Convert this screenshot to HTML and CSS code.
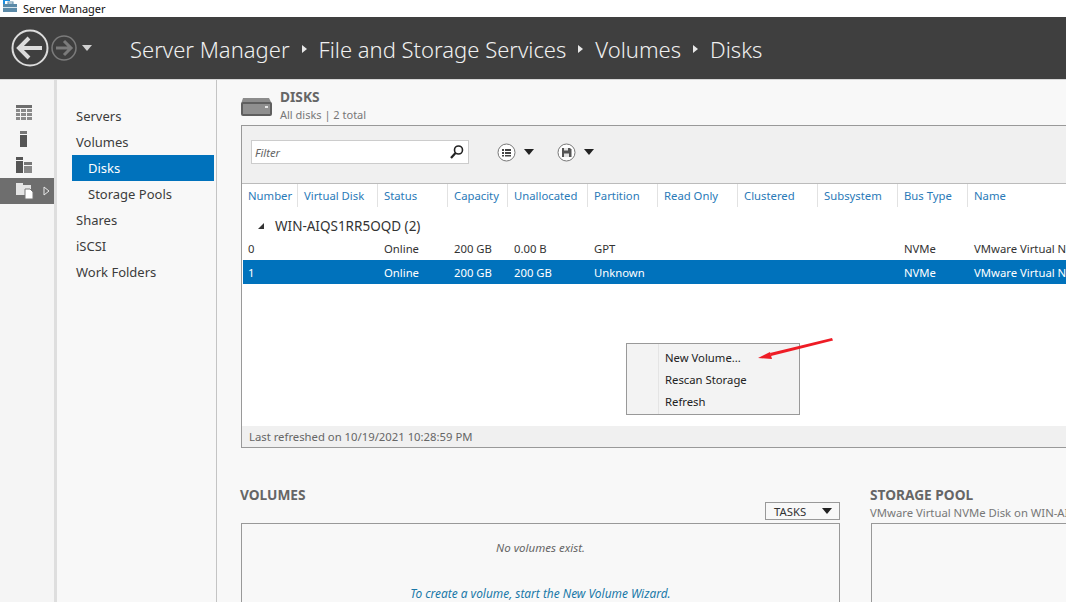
FILE: index.html
```html
<!DOCTYPE html>
<html lang="en">
<head>
    <meta charset="UTF-8">
    <title>Server Manager</title>
    <link rel="stylesheet" href="styles.css">
</head>
<body>
    <div class="titlebar">
        <svg class="app-icon" width="16" height="16" viewBox="0 0 16 16">
            <rect x="1" y="0" width="7" height="2" fill="#1d8fe0"/>
            <rect x="1" y="0" width="2" height="12" fill="#1d8fe0"/>
            <rect x="1" y="5" width="14" height="8" fill="#5b8aa8"/>
            <rect x="1" y="8" width="14" height="1" fill="#d5e3ec"/>
            <rect x="6" y="3" width="5" height="2" fill="none" stroke="#5b8aa8"/>
        </svg>
        <span>Server Manager</span>
    </div>

    <header class="header">
        <svg class="nav-back" width="38" height="38" viewBox="0 0 38 38">
            <circle cx="19" cy="19" r="17.5" fill="none" stroke="#dcdcdc" stroke-width="2"/>
            <path d="M8 19H31M18 9L8 19L18 29" fill="none" stroke="#dcdcdc" stroke-width="4"/>
        </svg>
        <svg class="nav-forward" width="26" height="26" viewBox="0 0 26 26">
            <circle cx="13" cy="13" r="12" fill="none" stroke="#7b7b7b" stroke-width="1.5"/>
            <path d="M20 13H5M13 6L20 13L13 20" fill="none" stroke="#7b7b7b" stroke-width="3"/>
        </svg>
        <span class="nav-caret"></span>
        <nav class="breadcrumb">
            <span>Server Manager</span><i></i>
            <span>File and Storage Services</span><i></i>
            <span>Volumes</span><i></i>
            <span>Disks</span>
        </nav>
    </header>

    <div class="workspace">
        <aside class="rail">
            <div class="rail-item">
                <svg width="16" height="16" viewBox="0 0 16 16" fill="#6d6d6d">
                    <rect width="16" height="3"/>
                    <path d="M0 4h4v3H0zM5 4h5v3H5zM11 4h5v3h-5zM0 8h4v3H0zM5 8h5v3H5zM11 8h5v3h-5zM0 12h4v3H0zM5 12h5v3H5zM11 12h5v3h-5z" fill="#8a8a8a"/>
                </svg>
            </div>
            <div class="rail-item">
                <svg width="16" height="16" viewBox="0 0 16 16" fill="#555">
                    <rect x="4" y="0" width="7" height="3" fill="#777"/>
                    <rect x="4" y="4" width="7" height="12"/>
                </svg>
            </div>
            <div class="rail-item">
                <svg width="16" height="16" viewBox="0 0 16 16" fill="#555">
                    <rect x="0" y="0" width="7" height="3"/>
                    <rect x="0" y="4" width="7" height="12"/>
                    <rect x="8" y="5" width="8" height="3" fill="#777"/>
                    <rect x="8" y="9" width="8" height="7" fill="#888"/>
                </svg>
            </div>
            <div class="rail-item rail-active">
                <svg width="18" height="18" viewBox="0 0 18 18">
                    <path d="M0 1h7v2h8v10H0z" fill="#e4e4e4"/>
                    <path d="M9 7h5l3 3v7H9z" fill="#fff" stroke="#777"/>
                </svg>
                <svg class="rail-arrow" width="7" height="10" viewBox="0 0 7 10">
                    <path d="M1 1L6 5L1 9z" fill="none" stroke="#e8e8e8"/>
                </svg>
            </div>
        </aside>

        <nav class="side">
            <a>Servers</a>
            <a>Volumes</a>
            <a class="sub selected">Disks</a>
            <a class="sub">Storage Pools</a>
            <a>Shares</a>
            <a>iSCSI</a>
            <a>Work Folders</a>
        </nav>

        <main class="main">
            <div class="section-head">
                <svg width="34" height="20" viewBox="0 0 34 20">
                    <path d="M3 1h26l3 6H1z" fill="#8c8c8c"/>
                    <rect x="1" y="5" width="31" height="14" rx="2" fill="#5f5f5f"/>
                    <rect x="3" y="7" width="27" height="10" fill="#8f8f8f"/>
                    <rect x="25" y="9" width="3" height="2" fill="#e6e6e6"/>
                </svg>
                <div>
                    <h2>DISKS</h2>
                    <p>All disks | 2 total</p>
                </div>
            </div>

            <section class="panel">
                <div class="toolbar">
                    <div class="filter">
                        <span>Filter</span>
                        <svg width="16" height="16" viewBox="0 0 16 16">
                            <circle cx="9.5" cy="6" r="4" fill="none" stroke="#222" stroke-width="1.6"/>
                            <path d="M6.5 9L2 14" stroke="#222" stroke-width="2.2"/>
                        </svg>
                    </div>
                    <button class="tool">
                        <svg width="19" height="19" viewBox="0 0 19 19">
                            <circle cx="9.500" cy="9.500" r="8.500" fill="#fff" stroke="#777"/>
                            <path d="M5 6h2v2H5zM8 6h6v2H8zM5 9h2v2H5zM8 9h6v2H8zM5 12h2v1.500H5zM8 12h6v1.500H8z" fill="#444"/>
                        </svg>
                        <i class="caret"></i>
                    </button>
                    <button class="tool">
                        <svg width="19" height="19" viewBox="0 0 19 19">
                            <circle cx="9.500" cy="9.500" r="8.500" fill="#fff" stroke="#777"/>
                            <path d="M5 5h8l1.500 1.500V14H5z" fill="#555"/>
                            <path d="M7 5h4v2.500H7zM7 10.500h5V14H7z" fill="#e4e4e4"/>
                        </svg>
                        <i class="caret"></i>
                    </button>
                </div>

                <div class="table">
                    <div class="row columns">
                        <span>Number</span><span>Virtual Disk</span><span>Status</span><span>Capacity</span><span>Unallocated</span><span>Partition</span><span>Read Only</span><span>Clustered</span><span>Subsystem</span><span>Bus Type</span><span>Name</span>
                    </div>
                    <div class="group"><i></i>WIN-AIQS1RR5OQD (2)</div>
                    <div class="row">
                        <span>0</span><span></span><span>Online</span><span>200 GB</span><span>0.00 B</span><span>GPT</span><span></span><span></span><span></span><span>NVMe</span><span>VMware Virtual NVMe Disk</span>
                    </div>
                    <div class="row row-selected">
                        <span>1</span><span></span><span>Online</span><span>200 GB</span><span>200 GB</span><span>Unknown</span><span></span><span></span><span></span><span>NVMe</span><span>VMware Virtual NVMe Disk</span>
                    </div>
                </div>

                <div class="status">Last refreshed on 10/19/2021 10:28:59 PM</div>
            </section>

            <div class="lower">
                <section class="volumes">
                    <div class="lower-head">
                        <h2>VOLUMES</h2>
                        <button class="tasks">TASKS<i class="caret"></i></button>
                    </div>
                    <div class="box box-empty">
                        <p class="empty">No volumes exist.</p>
                        <p class="wizard">To create a volume, start the New Volume Wizard.</p>
                    </div>
                </section>
                <section class="pool">
                    <div class="lower-head">
                        <div>
                            <h2>STORAGE POOL</h2>
                            <p>VMware Virtual NVMe Disk on WIN-AIQS1RR5OQD</p>
                        </div>
                    </div>
                    <div class="box"></div>
                </section>
            </div>
        </main>
    </div>

    <ul class="menu">
        <li>New Volume...</li>
        <li>Rescan Storage</li>
        <li>Refresh</li>
    </ul>
    <svg class="arrow" width="78" height="24" viewBox="0 0 78 24">
        <path d="M76 0L77 2.500L15 18L14 15z" fill="#ee1c25"/>
        <path d="M2 20L14 14L16 21z" fill="#ee1c25"/>
    </svg>
</body>
</html>
```

FILE: styles.css
```css
* {
    box-sizing: border-box;
}

html, body {
    margin: 0;
    height: 602px;
    overflow: hidden;
}

body {
    font-family: "Noto Sans", "Open Sans", sans-serif;
    font-size: 12px;
    color: #333;
    background-color: #f8f8f8;
    display: flex;
    flex-direction: column;
}

h2, p {
    margin: 0;
}

i {
    display: block;
}

.titlebar {
    height: 17px;
    flex: none;
    background-color: #fff;
    display: flex;
    align-items: center;
    gap: 5px;
    padding-left: 2px;
    font-size: 11px;
    color: #111;
    overflow: hidden;
}

.app-icon {
    margin-top: -4px;
    flex: none;
}

.header {
    height: 63px;
    flex: none;
    background-color: #3f3f3f;
    border-bottom: 1px solid #d6d6d6;
    display: flex;
    align-items: center;
    padding-left: 11px;
}

.nav-forward {
    margin-left: 2px;
}

.nav-caret {
    margin-left: 5px;
    margin-right: 38px;
    border: 5px solid transparent;
    border-top: 6px solid #d0d0d0;
    border-bottom: 0;
}

.breadcrumb {
    display: flex;
    align-items: center;
    gap: 12px;
    padding-top: 2px;
    font-size: 22px;
    font-weight: 300;
    color: #f0f0f0;
}

.breadcrumb i {
    border: 4px solid transparent;
    border-left: 5px solid #e8e8e8;
    border-right: 0;
}

.workspace {
    flex: 1;
    display: flex;
    min-height: 0;
}

.rail {
    width: 57px;
    flex: none;
    background-color: #f5f5f5;
    border-right: 3px solid #dedede;
    padding-top: 20px;
}

.rail-item {
    height: 26px;
    padding-left: 16px;
    display: flex;
    align-items: center;
    justify-content: flex-start;
    gap: 9px;
}

.rail-active {
    background-color: #6e6e6e;
}

.side {
    width: 160px;
    flex: none;
    background-color: #f8f8f8;
    border-right: 1px solid #c4c4c4;
    padding: 23px 2px 0 15px;
    display: flex;
    flex-direction: column;
    font-size: 13px;
    color: #3c3c3c;
}

.side a {
    height: 26px;
    line-height: 26px;
    padding-left: 4px;
}

.side .sub {
    padding-left: 16px;
}

.side .selected {
    background-color: #0072bc;
    color: #fff;
}

.main {
    flex: 1;
    min-width: 0;
    padding-left: 23px;
    overflow: hidden;
}

.section-head {
    height: 45px;
    padding-top: 8px;
    display: flex;
    gap: 6px;
}

.section-head svg {
    margin-top: 9px;
}

h2 {
    font-size: 13.700px;
    line-height: 17px;
    font-weight: 700;
    color: #666;
}

.section-head p {
    margin-top: 1px;
    font-size: 11px;
    line-height: 17px;
    color: #777;
}

.pool p {
    margin-top: 1px;
    font-size: 11.300px;
    line-height: 17px;
    color: #777;
}

.panel {
    width: 900px;
    height: 323px;
    margin-left: 1px;
    background-color: #fff;
    border: 1px solid #999;
    display: flex;
    flex-direction: column;
}

.toolbar {
    height: 58px;
    flex: none;
    background-color: #f0f0f0;
    border-bottom: 1px solid #bbb;
    display: flex;
    align-items: center;
    padding: 0 0 5px 9px;
}

.filter {
    width: 218px;
    height: 24px;
    background-color: #fff;
    border: 1px solid #ccc;
    display: flex;
    align-items: center;
    justify-content: space-between;
    padding: 0 3px;
    margin-right: 28px;
    font-style: italic;
    color: #666;
    font-size: 11.300px;
}

.tool {
    background: none;
    border: none;
    padding: 0;
    display: flex;
    align-items: center;
    gap: 8px;
    margin-right: 23px;
}

.caret {
    border: 5.500px solid transparent;
    border-top: 6px solid #222;
    border-bottom: 0;
}

.table {
    flex: 1;
}

.row {
    display: grid;
    grid-template-columns: 55px 80px 70px 60px 80px 70px 80px 80px 80px 70px 200px;
    height: 24px;
    align-items: center;
    margin-left: 1px;
    font-size: 11.300px;
    white-space: nowrap;
}

.row span {
    padding-left: 6px;
    overflow: hidden;
}

.row span:first-child {
    padding-left: 5px;
}

.row.columns {
    height: 23px;
    color: #2a7ab8;
}

.columns span {
    height: 23px;
    line-height: 23px;
    border-right: 1px solid #e2e2e2;
}

.group {
    height: 29px;
    padding: 8px 0 0 16px;
    display: flex;
    align-items: center;
    gap: 11px;
    font-size: 13.500px;
    color: #333;
}

.group i {
    border-left: 6px solid transparent;
    border-bottom: 6px solid #333;
}

.row-selected {
    background-color: #0072bc;
    color: #fff;
}

.status {
    height: 21px;
    flex: none;
    background-color: #f0f0f0;
    padding-left: 7px;
    line-height: 21px;
    font-size: 11.300px;
    color: #666;
}

.lower {
    display: flex;
    gap: 30px;
    margin-top: 38px;
}

.volumes {
    width: 600px;
    flex: none;
}

.pool {
    width: 500px;
    flex: none;
}

.lower-head {
    height: 37px;
    display: flex;
    justify-content: space-between;
    align-items: flex-start;
}

.tasks {
    margin-top: 16px;
    width: 75px;
    height: 18px;
    background: none;
    border: 1px solid #999;
    padding: 0 7px 0 8px;
    display: flex;
    align-items: center;
    justify-content: space-between;
    font: inherit;
    font-size: 11.300px;
    color: #333;
}

.box {
    margin-left: 1px;
    height: 120px;
    border: 1px solid #999;
}

.box-empty {
    text-align: center;
    font-style: italic;
    font-size: 11.500px;
    padding-top: 16px;
}

.empty {
    color: #666;
}

.wizard {
    margin-top: 30px;
    font-size: 11.900px;
    color: #1a78a8;
}

.menu {
    position: absolute;
    left: 626px;
    top: 343px;
    width: 174px;
    height: 72px;
    margin: 0;
    padding: 3px 0 0 38px;
    list-style: none;
    background-color: #f3f3f3;
    border: 1px solid #999;
    font-size: 11.300px;
    color: #222;
}

.menu::before {
    content: "";
    position: absolute;
    left: 31px;
    top: 0;
    bottom: 0;
    border-left: 1px solid #e4e4e4;
}

.menu li {
    height: 22px;
    line-height: 22px;
}

.arrow {
    position: absolute;
    left: 756px;
    top: 338px;
}
```
